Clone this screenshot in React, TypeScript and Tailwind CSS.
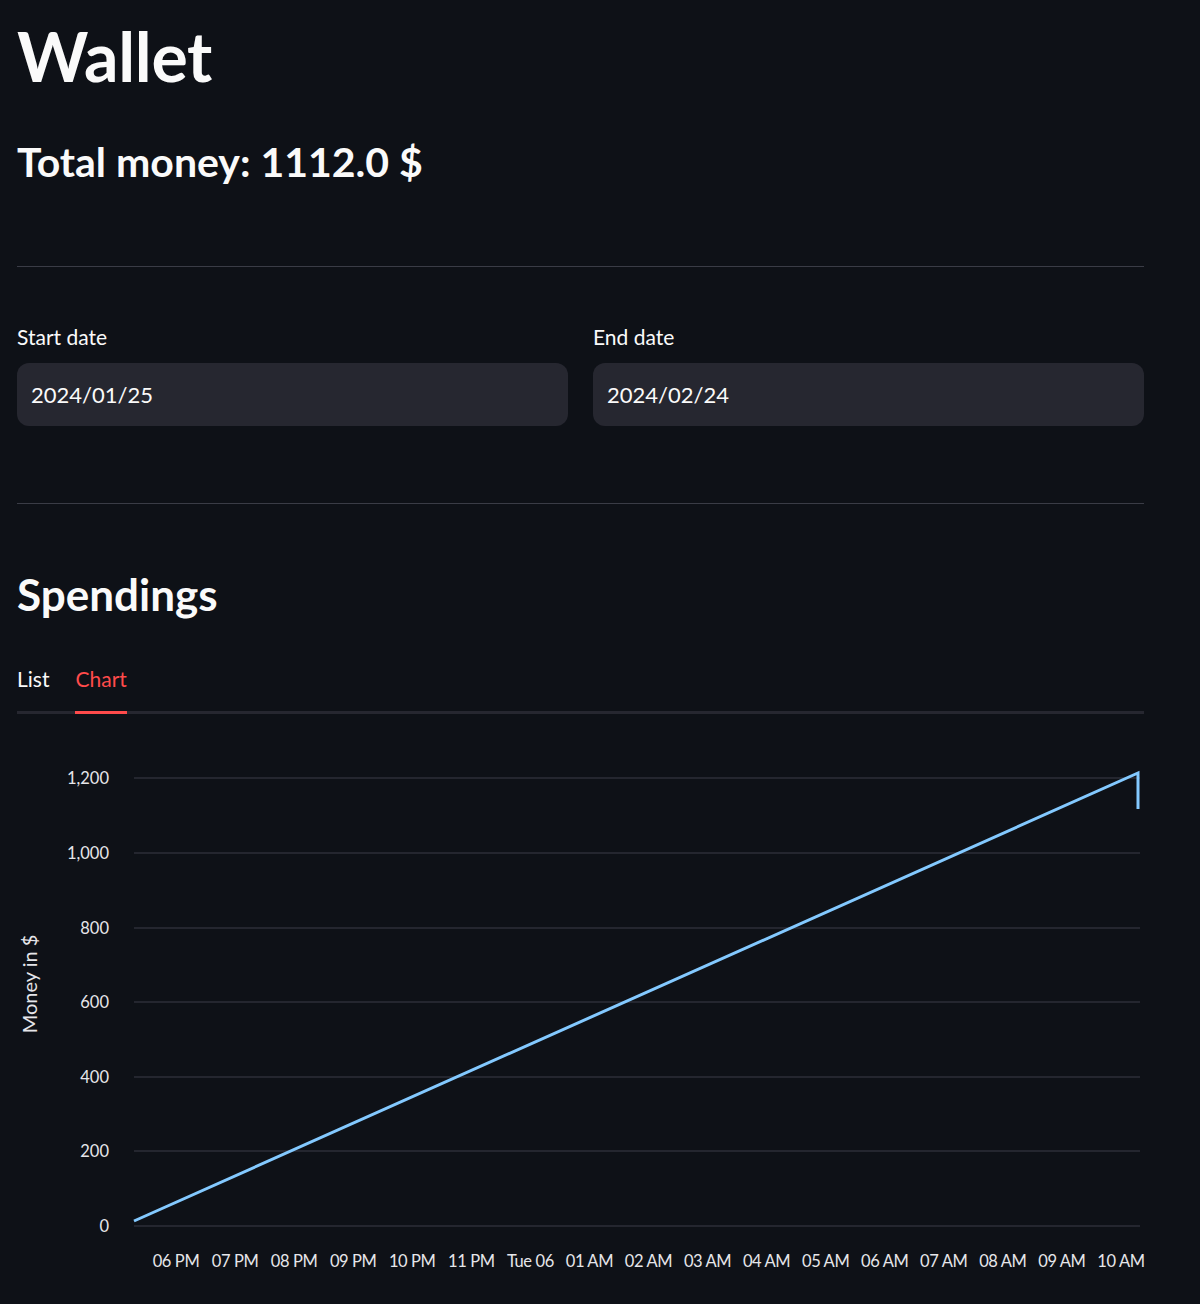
import React from 'react';

const FONT = '"Lato", "Noto Sans", sans-serif';

const yTicks = [
  { label: '1,200', y: 777 },
  { label: '1,000', y: 852 },
  { label: '800', y: 927 },
  { label: '600', y: 1001 },
  { label: '400', y: 1076 },
  { label: '200', y: 1150 },
  { label: '0', y: 1225 },
];

const xTicks = [
  '06 PM', '07 PM', '08 PM', '09 PM', '10 PM', '11 PM', 'Tue 06', '01 AM', '02 AM',
  '03 AM', '04 AM', '05 AM', '06 AM', '07 AM', '08 AM', '09 AM', '10 AM',
];

const TOP = 730;
const LEFT = 17;

const SpendingChart: React.FC = () => {
  return (
    <svg width={1127} height={570} className="block overflow-visible" style={{ fontFamily: FONT }}>
      {yTicks.map((t) => (
        <g key={t.label}>
          <line x1={134 - LEFT} x2={1140 - LEFT} y1={t.y - TOP} y2={t.y - TOP} stroke="#2c2e38" strokeWidth={1.5} />
          <text x={109 - LEFT} y={t.y - TOP + 6} textAnchor="end" fill="#e6e6ea" fontSize={16.5}>
            {t.label}
          </text>
        </g>
      ))}
      {xTicks.map((label, i) => (
        <text
          key={label}
          x={176 - LEFT + i * 59.06}
          y={1266 - TOP}
          textAnchor="middle"
          fill="#e6e6ea"
          fontSize={16.5}
          letterSpacing={-0.4}
        >
          {label}
        </text>
      ))}
      <text
        transform={`translate(${37 - LEFT}, ${983 - TOP}) rotate(-90)`}
        textAnchor="middle"
        fill="#e6e6ea"
        fontSize={20}
      >
        Money in $
      </text>
      <polyline
        points={`${134 - LEFT},${1220 - TOP} ${1138 - LEFT},${772 - TOP} ${1138 - LEFT},${808 - TOP}`}
        fill="none"
        stroke="#83c9ff"
        strokeWidth={3}
        strokeLinejoin="miter"
      />
    </svg>
  );
};

export default function App() {
  return (
    <div className="min-h-screen bg-[#0e1117] text-[#fafafa]" style={{ fontFamily: FONT }}>
      <div className="w-[1127px] ml-[17px] flex flex-col">
        {/* Header */}
        <h1 className="pt-[18px] text-[68px] leading-[76px] font-bold tracking-[-0.3px]">Wallet</h1>
        <h3 className="mt-[43px] text-[41px] leading-[50px] font-bold tracking-[0px]">Total money: 1112.0 $</h3>

        <div className="mt-[79px] h-px bg-[#3a3c46]" />

        {/* Date inputs */}
        <div className="mt-[56px] grid grid-cols-2 gap-[25px]">
          <div className="flex flex-col">
            <label className="text-[21px] leading-[28px]">Start date</label>
            <div className="mt-[12px] h-[63px] rounded-[12px] bg-[#262730] flex items-center px-[14px] text-[22px]">
              2024/01/25
            </div>
          </div>
          <div className="flex flex-col">
            <label className="text-[21px] leading-[28px]">End date</label>
            <div className="mt-[12px] h-[63px] rounded-[12px] bg-[#262730] flex items-center px-[14px] text-[22px]">
              2024/02/24
            </div>
          </div>
        </div>

        <div className="mt-[77px] h-px bg-[#3a3c46]" />

        {/* Spendings */}
        <h2 className="mt-[62px] text-[44px] leading-[56px] font-bold">Spendings</h2>

        <div className="mt-[43px] relative flex gap-[26px] text-[21px] leading-[28px]">
          <span className="pb-[21px]">List</span>
          <span className="pb-[21px] text-[#ff4b4b] relative z-10">
            Chart
            <span className="absolute left-0 right-0 bottom-0 h-[3px] bg-[#ff4b4b]" />
          </span>
          <div className="absolute left-0 right-0 bottom-0 h-[3px] bg-[#262730]" />
        </div>

        <div className="mt-[17px]">
          <SpendingChart />
        </div>
      </div>
    </div>
  );
}
